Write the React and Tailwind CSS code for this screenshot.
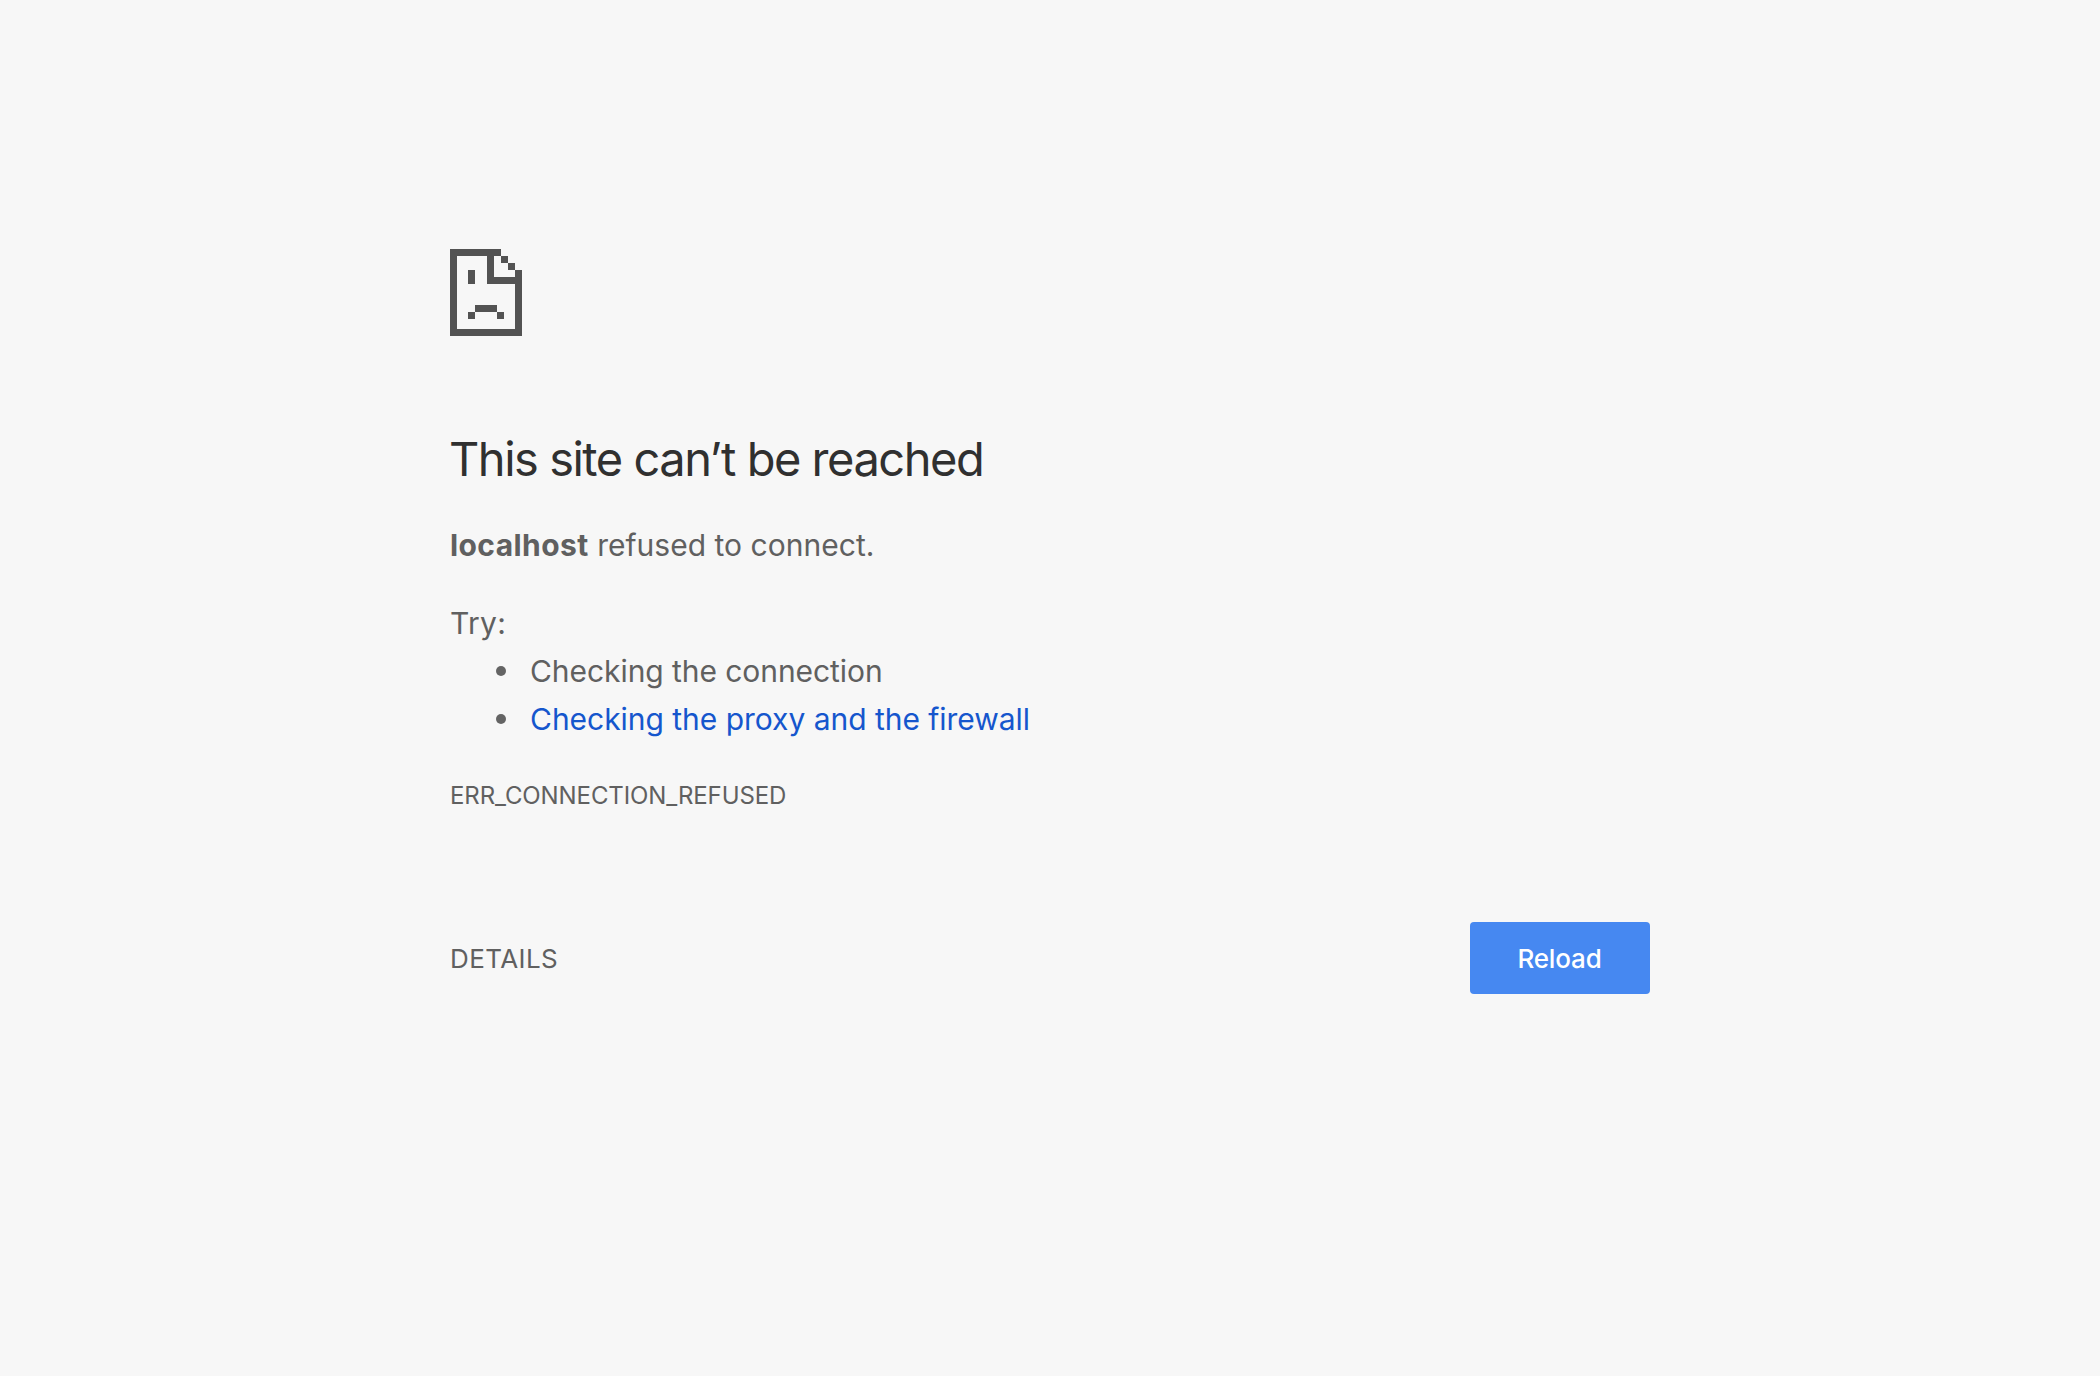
function SadPage() {
  return (
    <svg className="block h-[87px] w-[72px]" viewBox="0 0 72 87" fill="#535353" shapeRendering="crispEdges">
      <path d="M0 0H51V7H7V80H65V35H37V7H44V28H65V21H72V87H0Z" />
      <path d="M51 7H58V14H51ZM58 14H65V21H58ZM18 21H25V35H18ZM25 56H47V63H25ZM18 63H25V70H18ZM47 63H54V70H47Z" />
    </svg>
  );
}

function Bullet({ children }) {
  return (
    <li className="flex h-12 items-center">
      <span className="mr-6 ml-[46px] size-2.5 shrink-0 rounded-full bg-[#646464]" />
      {children}
    </li>
  );
}

export default function App() {
  return (
    <main className="min-h-[1376px] bg-[#f7f7f7] pt-[249px] font-['Inter',sans-serif] text-[30px] leading-[48px] whitespace-nowrap text-[#606060]">
      <div className="mx-auto w-[1200px]">
        <SadPage />
        <h1 className="mt-[94px] -ml-px text-[47px] leading-[58px] font-normal tracking-[-1.48px] text-[#303030]">
          This site can’t be reached
        </h1>
        <p className="mt-[33px] tracking-[0.02px]">
          <strong className="font-bold tracking-[0.42px]">localhost</strong> refused to connect.
        </p>
        <p className="mt-[30px] tracking-[0.3px]">Try:</p>
        <ul>
          <Bullet>
            <span className="tracking-[-0.06px]">Checking the connection</span>
          </Bullet>
          <Bullet>
            <a href="#" className="tracking-[-0.03px] text-[#1556cd]">Checking the proxy and the firewall</a>
          </Bullet>
        </ul>
        <p className="mt-[34px] text-2xl leading-[38px] tracking-[-0.1px]">ERR_CONNECTION_REFUSED</p>
        <div className="mt-[107px] flex items-center justify-between text-[26px]">
          <button className="pt-0.5 tracking-[0.4px]">DETAILS</button>
          <button className="h-[72px] w-[180px] rounded bg-[#4688f1] pt-0.5 pr-px font-medium tracking-[-0.15px] text-white">Reload</button>
        </div>
      </div>
    </main>
  );
}
